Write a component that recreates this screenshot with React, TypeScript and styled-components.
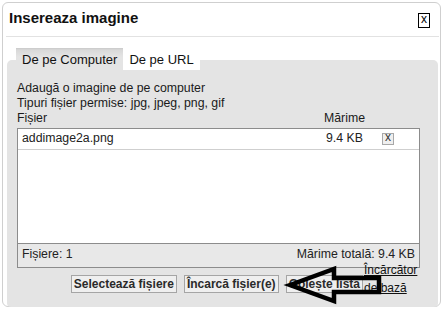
import React from "react";
import styled, { createGlobalStyle } from "styled-components";

const Global = createGlobalStyle`
  html, body { margin: 0; padding: 0; background: #ffffff; }
  body { font-family: "Liberation Sans", Arial, sans-serif; color: #222; }
  * { box-sizing: border-box; }
`;

const Dialog = styled.div`
  position: relative;
  margin: 2px 0 0 2px;
  width: 439px;
  height: 305px;
  border: 1px solid #cfcfcf;
  border-radius: 6px;
  background: #fff;
  display: flex;
  flex-direction: column;
`;

const Header = styled.div`
  display: flex;
  justify-content: space-between;
  align-items: flex-start;
  margin: 0 1px 0 3px;
  padding: 6px 9px 8px 3px;
  border-bottom: 1px solid #e2e2e2;
`;

const Title = styled.h1`
  margin: 0;
  font-size: 15px;
  line-height: 18px;
  font-weight: bold;
  color: #111;
`;

const CloseButton = styled.button`
  margin-top: 4px;
  width: 12px;
  height: 15px;
  padding: 0 0 2px;
  border: 1px solid #000;
  background: #fff;
  font-family: "Liberation Sans", Arial, sans-serif;
  font-size: 12px;
  line-height: 11px;
  color: #000;
  display: flex;
  align-items: center;
  justify-content: center;
`;

const Body = styled.div`
  flex: 1;
  display: flex;
  flex-direction: column;
  padding: 11px 2px 4px 4px;
`;

const TabRow = styled.div`
  position: relative;
  z-index: 1;
  display: flex;
  align-items: flex-end;
  margin: 0 0 -10px 9px;
`;

const Tab = styled.div<{ $active?: boolean }>`
  font-size: 13px;
  line-height: 15px;
  color: #111;
  padding: ${(p) => (p.$active ? "4px 6px 3px" : "3px 6px 3px")};
  background: ${(p) =>
    p.$active ? "linear-gradient(#c9c9c9 0, #d9d9d9 2px, #e4e4e4 9px)" : "#ffffff"};
`;

const Panel = styled.div`
  flex: 1;
  background: #e4e4e4;
  border-radius: 5px 5px 4px 4px;
  padding: 21px 18px 10px 10px;
  display: flex;
  flex-direction: column;
`;

const Line = styled.div`
  font-size: 12.3px;
  line-height: 15px;
  color: #1a1a1a;
`;

const ColumnHead = styled.div`
  display: grid;
  grid-template-columns: 1fr 96px;
  font-size: 12.3px;
  line-height: 15px;
  color: #1a1a1a;
`;

const FileBox = styled.div`
  margin-top: 2px;
  border: 1px solid #8c8c8c;
  display: flex;
  flex-direction: column;
`;

const FileList = styled.div`
  height: 114px;
  background: #fff;
`;

const FileRow = styled.div`
  display: grid;
  grid-template-columns: 1fr 56px 37px;
  align-items: center;
  padding: 2px 0 3px 4px;
  border-bottom: 1px solid #cfcfcf;
  font-size: 12.3px;
  line-height: 15px;
  color: #222;
`;

const RemoveButton = styled.button`
  width: 12px;
  height: 12px;
  padding: 0 0 2px;
  border: 1px solid #a8a8a8;
  background: #efefef;
  font-family: "Liberation Sans", Arial, sans-serif;
  font-size: 12px;
  line-height: 9px;
  color: #333;
  display: flex;
  align-items: center;
  justify-content: center;
`;

const Footer = styled.div`
  display: flex;
  justify-content: space-between;
  padding: 3px 4px 5px 4px;
  border-top: 1px solid #8c8c8c;
  background: #e8e8e8;
  font-size: 12.3px;
  line-height: 15px;
  color: #222;
`;

const ActionRow = styled.div`
  margin-top: 7px;
  display: flex;
  justify-content: flex-end;
  align-items: flex-start;
  gap: 7px;
`;

const ActionButton = styled.button`
  height: 18px;
  padding: 1px 2px;
  border: 1px solid #a5a5a5;
  background: #efefef;
  font-family: "Liberation Sans", Arial, sans-serif;
  font-size: 12px;
  line-height: 14px;
  font-weight: bold;
  color: #2a2a2a;
  white-space: nowrap;
`;

const BasicLink = styled.a`
  width: 56px;
  margin: -14px 0 0 -6px;
  font-size: 12px;
  line-height: 18px;
  color: #111;
  text-decoration: underline;
`;

const Arrow = styled.svg`
  position: absolute;
  left: 276px;
  top: 258px;
  width: 106px;
  height: 46px;
  pointer-events: none;
`;

export default function App() {
  return (
    <>
      <Global />
      <Dialog>
        <Header>
          <Title>Insereaza imagine</Title>
          <CloseButton>x</CloseButton>
        </Header>
        <Body>
          <TabRow>
            <Tab $active>De pe Computer</Tab>
            <Tab>De pe URL</Tab>
          </TabRow>
          <Panel>
            <Line>Adaugă o imagine de pe computer</Line>
            <Line>Tipuri fișier permise: jpg, jpeg, png, gif</Line>
            <ColumnHead>
              <span>Fișier</span>
              <span>Mărime</span>
            </ColumnHead>
            <FileBox>
              <FileList>
                <FileRow>
                  <span>addimage2a.png</span>
                  <span>9.4 KB</span>
                  <RemoveButton>x</RemoveButton>
                </FileRow>
              </FileList>
              <Footer>
                <span>Fișiere: 1</span>
                <span>Mărime totală: 9.4 KB</span>
              </Footer>
            </FileBox>
            <ActionRow>
              <ActionButton>Selectează fișiere</ActionButton>
              <ActionButton>Încarcă fișier(e)</ActionButton>
              <ActionButton>Golește listă</ActionButton>
              <BasicLink href="#">Încărcător de bază</BasicLink>
            </ActionRow>
          </Panel>
        </Body>
        <Arrow viewBox="0 0 106 46">
          <polygon
            points="11,24 55,8 55,17 100,17 100,31 55,31 55,40"
            fill="none"
            stroke="#000"
            strokeWidth="4.5"
            strokeLinejoin="miter"
          />
        </Arrow>
      </Dialog>
    </>
  );
}
